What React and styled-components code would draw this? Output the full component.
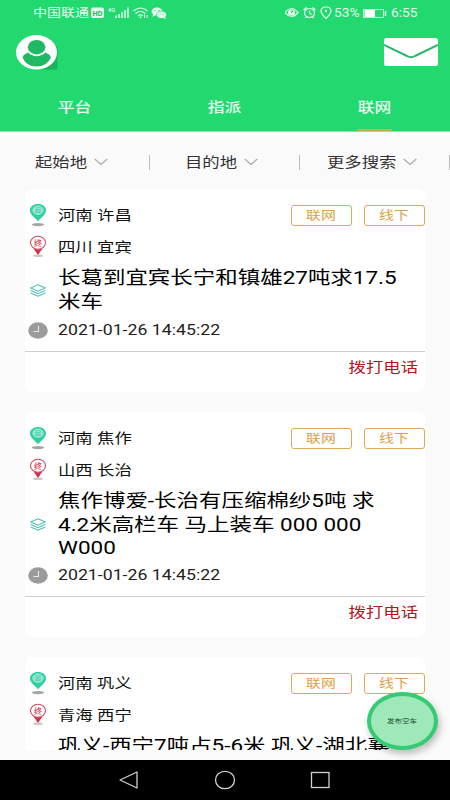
import React from "react";
import styled, { createGlobalStyle } from "styled-components";

const GlobalStyle = createGlobalStyle`
  * {
    box-sizing: border-box;
  }

  body {
    margin: 0;
    background: #fafafa;
    font-family: Roboto, "Noto Sans CJK SC", sans-serif;
  }
`;

const Screen = styled.div`
  display: flex;
  flex-direction: column;
  width: 450px;
  height: 800px;
  overflow: hidden;
  background: #fbfafb;
`;

const Text = styled.span`
  display: block;
  flex: none;
  white-space: nowrap;
  font-size: ${props => props.$size || 14}px;
  line-height: ${props => props.$line || 20}px;
  font-weight: ${props => props.$weight || 400};
  color: ${props => props.$color || "#111"};
  transform: scaleX(${props => props.$stretch || 1.24});
  transform-origin: ${props => props.$origin || "left"} center;
`;

const Header = styled.header`
  display: flex;
  flex-direction: column;
  flex: none;
  height: 132px;
  background: #21d96e;
  border-bottom: 1px solid #8ddfac;
`;

const StatusBar = styled.div`
  display: flex;
  justify-content: space-between;
  height: 26px;
  padding: 0 32px 0 33px;
`;

const StatusGroup = styled.div`
  display: flex;
  align-items: center;
`;

const Carrier = styled.div`
  width: 58px;
  padding-top: 2px;
`;

const Percent = styled.div`
  width: 29px;
`;

const Clock = styled.div`
  width: 27px;
  margin-left: 4px;
`;

const TopBar = styled.div`
  display: flex;
  justify-content: space-between;
  align-items: center;
  height: 52px;
  padding: 0 12px 0 16px;
`;

const Tabs = styled.nav`
  display: flex;
  flex: 1;
`;

const Tab = styled.div`
  display: flex;
  flex: 1;
  flex-direction: column;
  align-items: center;
  padding: 19px 1px 0 0;
`;

const TabLine = styled.div`
  width: 35px;
  height: 2px;
  margin-top: auto;
  background: #c3b04d;
`;

const Filters = styled.div`
  display: flex;
  flex: none;
  height: 57px;
  padding-top: 20px;
`;

const Filter = styled.div`
  display: flex;
  align-items: center;
  gap: 7px;
  width: 150px;
  height: 20px;
  padding-left: ${props => props.$pad}px;
`;

const FilterLabel = styled.div`
  width: ${props => props.$width}px;
`;

const Divider = styled.div`
  width: 1px;
  height: 15px;
  margin-left: auto;
  background: #bdbdbd;
`;

const List = styled.main`
  display: flex;
  flex-direction: column;
  gap: 20px;
  height: 561px;
  padding: 0 25px;
  overflow: hidden;
`;

const Card = styled.article`
  flex: none;
  padding-top: 10px;
  border-radius: 7px;
  background: #fff;
`;

const Row = styled.div`
  display: flex;
  align-items: center;
  height: 32px;
`;

const GoodsRow = styled.div`
  display: flex;
  align-items: center;
  margin-top: 3px;
`;

const Goods = styled.div`
  min-height: ${props => props.$minHeight || 0}px;
`;

const IconCell = styled.div`
  display: flex;
  flex: none;
  justify-content: center;
  width: 26px;
  margin-right: 7px;
`;

const Tags = styled.div`
  display: flex;
  gap: 12px;
  margin-left: auto;
`;

const Tag = styled.div`
  display: flex;
  align-items: center;
  justify-content: center;
  width: 61px;
  height: 21px;
  padding-top: 2px;
  border: 1px solid #dba957;
  border-radius: 3px;
`;

const Footer = styled.div`
  display: flex;
  justify-content: flex-end;
  height: 41px;
  margin-top: 5px;
  padding: 5px 7px 0 0;
  border-top: 1px solid #cfcdcd;
`;

const NavBar = styled.footer`
  display: flex;
  flex: none;
  justify-content: center;
  align-items: center;
  gap: 74px;
  height: 40px;
  margin-top: auto;
  background: #000;
`;

const Publish = styled.button`
  position: absolute;
  left: 367px;
  top: 692px;
  display: flex;
  align-items: center;
  justify-content: center;
  width: 71px;
  height: 58px;
  padding: 0;
  border: 4px solid #34cb72;
  border-radius: 50%;
  background: #9ee8b9;
  box-shadow: 2px 4px 7px rgba(0, 0, 0, 0.25);
  font-family: inherit;
`;

const StartIcon = () => (
  <svg width="18" height="24" viewBox="0 0 18 24">
    <ellipse cx="9" cy="21.6" rx="6.3" ry="1.6" fill="#a5a5a5" />
    <path d="M9 18.5C7 15 1 12 1 7.5C1 3.5 4.5 1 9 1s8 2.5 8 6.5C17 12 11 15 9 18.5z" fill="#2fcfa0" />
    <ellipse cx="9" cy="7.3" rx="5.7" ry="4.7" fill="#8fe9d2" />
    <text x="9" y="9.4" fontSize="6" textAnchor="middle" fill="#4cc7a8">起</text>
  </svg>
);

const EndIcon = () => (
  <svg width="18" height="24" viewBox="0 0 18 24">
    <ellipse cx="9" cy="20.8" rx="5" ry="1.2" fill="#cfc6c6" />
    <path d="M9 20L4.5 13.500h9z" fill="#d32f45" />
    <ellipse cx="9" cy="7.800" rx="7.500" ry="6.500" fill="#fff" stroke="#cf4a5d" strokeWidth="1.1" />
    <text x="9" y="10.6" fontSize="8" fontWeight="500" textAnchor="middle" fill="#d83a4c">终</text>
  </svg>
);

const LayersIcon = () => (
  <svg width="16" height="13" viewBox="0 0 16 13" fill="none" stroke="#4cbfb5" strokeWidth="1.1">
    <path d="M8 .8L15.3 4 8 7.2.7 4z" />
    <path d="M.7 6.5L8 9.7l7.3-3.200M.7 9L8 12.200 15.300 9" />
  </svg>
);

const ClockIcon = () => (
  <svg width="20" height="17" viewBox="0 0 20 17">
    <ellipse cx="10" cy="8.500" rx="9.800" ry="8.200" fill="#9b9b9b" />
    <path d="M10.5 4v5.500H5.500" fill="none" stroke="#e8e8e8" strokeWidth="1.1" />
  </svg>
);

const ChevronIcon = () => (
  <svg width="14" height="8" viewBox="0 0 14 8">
    <path d="M.7 1L7 6.500 13.300 1" fill="none" stroke="#a8a8a8" strokeWidth="1.2" />
  </svg>
);

const AvatarIcon = () => (
  <svg width="42" height="35" viewBox="0 0 42 35">
    <path d="M36 8L41.5 12V34.500H23z" fill="#18b65b" />
    <ellipse cx="20.5" cy="17.300" rx="20.500" ry="17.200" fill="#fff" />
    <ellipse cx="20.6" cy="12.200" rx="8.800" ry="7.300" fill="#1fb964" />
    <path d="M6.5 22.500Q8 19 12 17.500Q20.500 25 29.500 17.500Q33.500 19 35 22.500Q31 31.500 20.500 31.500T6.500 22.500z" fill="#1fb964" />
  </svg>
);

const MailIcon = () => (
  <svg width="54" height="28" viewBox="0 0 54 28">
    <rect width="54" height="28" rx="2.5" fill="#fff" />
    <path d="M0 7L23 18Q27 20.300 31 18L54 7" fill="none" stroke="#28ba69" strokeWidth="2" />
  </svg>
);

const SignalIcons = () => (
  <svg width="78" height="16" viewBox="0 0 78 16" fill="none" stroke="#e4faed">
    <rect x="0" y="2.500" width="13" height="10.500" rx="2" fill="#e4faed" stroke="none" />
    <text x="6.5" y="10.500" fontSize="7.5" fontWeight="700" textAnchor="middle" fill="#21b963" stroke="none" textLength="10" lengthAdjust="spacingAndGlyphs">HD</text>
    <text x="17" y="6.500" fontSize="6" fontWeight="500" fill="#e4faed" stroke="none" textLength="7" lengthAdjust="spacingAndGlyphs">4G</text>
    <path d="M25 13v-2.500M28 13V9M31 13V7M34 13V5M37 13V2.500" strokeWidth="1.5" />
    <path d="M42.5 6Q49.500 0 56.500 6M44.500 8.500Q49.500 4.500 54.500 8.500M47 10.700Q49.500 9 52 10.700" strokeWidth="1.2" />
    <circle cx="49.5" cy="12.300" r="1" fill="#e4faed" stroke="none" />
    <path d="M53.5 13V9.500M56 13v-3" />
    <g fill="#e4faed" stroke="none">
      <ellipse cx="66" cy="6.500" rx="5.500" ry="4" />
      <path d="M62 9l-.5 3 3.500-2z" />
      <ellipse cx="70.5" cy="9.800" rx="5" ry="3.700" stroke="#21d96e" strokeWidth=".7" />
      <path d="M72 12.500l2.500 1.700-.3-3z" />
    </g>
    <g fill="#21b963" stroke="none">
      <circle cx="64" cy="5.500" r=".6" />
      <circle cx="68" cy="5.500" r=".6" />
      <circle cx="69" cy="9" r=".5" />
      <circle cx="72" cy="9" r=".5" />
    </g>
  </svg>
);

const AlertIcons = () => (
  <svg width="49" height="16" viewBox="0 0 49 16" fill="none" stroke="#e4faed" strokeWidth="1.2">
    <path d="M0 7.500Q6.500-.5 13 7.500Q6.500 15.500 0 7.500z" />
    <ellipse cx="6.5" cy="7.500" rx="3" ry="2.500" fill="#e4faed" />
    <path d="M6 7.500L8 6" stroke="#21b963" />
    <ellipse cx="24.5" cy="8" rx="5" ry="4.500" />
    <path d="M24.5 5.500V8l2 1.500M18.500 5L21.500 2.500M30.500 5L27.500 2.500M20.500 13l1-1M28.500 13l-1-1" />
    <path d="M41 13.500C38.500 11 36 8.500 36 6C36 3.500 38.300 2 41 2s5 1.500 5 4C46 8.500 43.500 11 41 13.500z" />
    <circle cx="41" cy="6" r="1.2" fill="#e4faed" stroke="none" />
  </svg>
);

const BatteryIcon = () => (
  <svg width="24" height="9" viewBox="0 0 24 9">
    <rect x=".5" y=".5" width="20" height="8" fill="none" stroke="#b9f3d0" />
    <rect x="1.5" y="1" width="10.500" height="7" fill="#fff" />
    <path d="M22.5 2v5" stroke="#e4faed" strokeWidth="1.5" />
  </svg>
);

const tabs = ["平台", "指派", "联网"];

const filters = [
  { label: "起始地", width: 52, pad: 35 },
  { label: "目的地", width: 52, pad: 35 },
  { label: "更多搜索", width: 69, pad: 27 }
];

const orders = [
  {
    from: "河南 许昌",
    to: "四川 宜宾",
    lines: ["长葛到宜宾长宁和镇雄27吨求17.5", "米车"],
    time: "2021-01-26 14:45:22"
  },
  {
    from: "河南 焦作",
    to: "山西 长治",
    lines: ["焦作博爱-长治有压缩棉纱5吨 求", "4.2米高栏车 马上装车 000 000", "W000"],
    time: "2021-01-26 14:45:22"
  },
  {
    from: "河南 巩义",
    to: "青海 西宁",
    lines: ["巩义-西宁7吨占5-6米 巩义-湖北襄"],
    minHeight: 72
  }
];

const Order = ({ order }) => (
  <Card>
    <Row>
      <IconCell>
        <StartIcon />
      </IconCell>
      <Text>{order.from}</Text>
      <Tags>
        {["联网", "线下"].map(tag => (
          <Tag key={tag}>
            <Text $size={12} $color="#dba14a" $origin="center">
              {tag}
            </Text>
          </Tag>
        ))}
      </Tags>
    </Row>
    <Row>
      <IconCell>
        <EndIcon />
      </IconCell>
      <Text>{order.to}</Text>
    </Row>
    <GoodsRow>
      <IconCell>
        <LayersIcon />
      </IconCell>
      <Goods $minHeight={order.minHeight}>
        {order.lines.map((line, i) => (
          <Text
            key={line}
            $size={18}
            $line={i === 2 ? 22 : 24}
            $stretch={1.248}
            $color="#000"
          >
            {line}
          </Text>
        ))}
      </Goods>
    </GoodsRow>
    {order.time && (
      <>
        <Row>
          <IconCell>
            <ClockIcon />
          </IconCell>
          <Text $color="#222" $stretch={1.265}>
            {order.time}
          </Text>
        </Row>
        <Footer>
          <Text $color="#b3151d" $origin="right">
            拨打电话
          </Text>
        </Footer>
      </>
    )}
  </Card>
);

const App = () => (
  <Screen>
    <GlobalStyle />
    <Header>
      <StatusBar>
        <StatusGroup>
          <Carrier>
            <Text $size={11.3} $color="#e4faed">
              中国联通
            </Text>
          </Carrier>
          <SignalIcons />
        </StatusGroup>
        <StatusGroup>
          <AlertIcons />
          <Percent>
            <Text $size={12} $color="#e4faed" $stretch={1.14}>
              53%
            </Text>
          </Percent>
          <BatteryIcon />
          <Clock>
            <Text $size={12} $color="#e4faed" $stretch={1.15}>
              6:55
            </Text>
          </Clock>
        </StatusGroup>
      </StatusBar>
      <TopBar>
        <AvatarIcon />
        <MailIcon />
      </TopBar>
      <Tabs>
        {tabs.map(tab => (
          <Tab key={tab}>
            <Text $size={13.5} $weight={500} $color="#e9fcf1" $origin="center">
              {tab}
            </Text>
            {tab === "联网" && <TabLine />}
          </Tab>
        ))}
      </Tabs>
    </Header>
    <Filters>
      {filters.map(filter => (
        <Filter key={filter.label} $pad={filter.pad}>
          <FilterLabel $width={filter.width}>
            <Text $color="#333">{filter.label}</Text>
          </FilterLabel>
          <ChevronIcon />
          <Divider />
        </Filter>
      ))}
    </Filters>
    <List>
      {orders.map(order => (
        <Order key={order.from} order={order} />
      ))}
    </List>
    <NavBar>
      <svg width="22" height="22" viewBox="0 0 22 22" fill="none" stroke="#d0d0d0" strokeWidth="1.3">
        <path d="M2 11L19 3v16z" strokeLinejoin="round" />
      </svg>
      <svg width="22" height="22" viewBox="0 0 22 22" fill="none" stroke="#d0d0d0" strokeWidth="1.3">
        <ellipse cx="11" cy="11" rx="9.5" ry="8.7" />
      </svg>
      <svg width="22" height="22" viewBox="0 0 22 22" fill="none" stroke="#d0d0d0" strokeWidth="1.3">
        <rect x="1.5" y="3.500" width="17.500" height="15" />
      </svg>
    </NavBar>
    <Publish>
      <Text $size={6} $line={10} $color="#244f34" $origin="center">
        发布空车
      </Text>
    </Publish>
  </Screen>
);

export default App;
